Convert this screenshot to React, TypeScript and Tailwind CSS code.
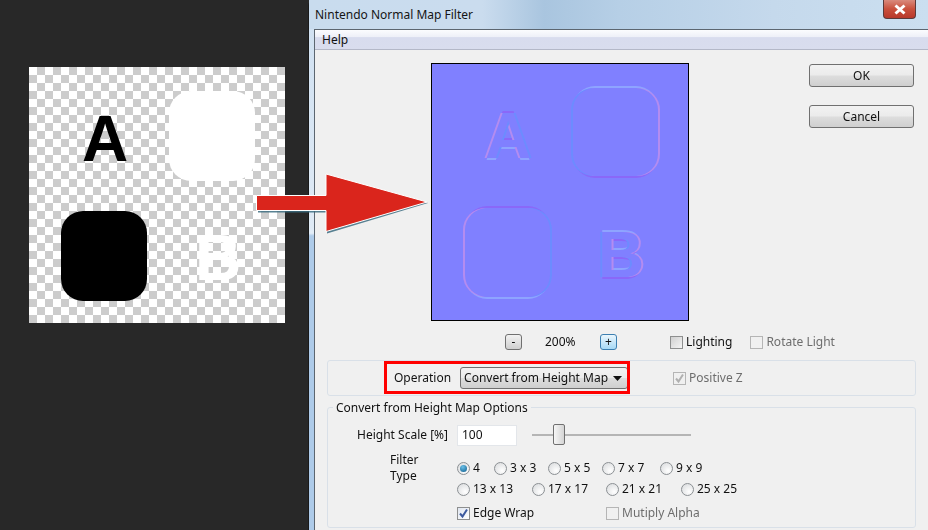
import React from "react";

const Emboss = ({ raised, children }: { raised: boolean; children: React.ReactNode }) => {
  const c = raised
    ? { l: "#6c8cff", r: "#b48cf0", t: "#8ea4ff", b: "#8a68f8" }
    : { l: "#b48cf0", r: "#6c8cff", t: "#8a68f8", b: "#8ea4ff" };
  return (
    <g>
      <g fill={c.t} transform="translate(0,-2)">{children}</g>
      <g fill={c.b} transform="translate(0,2)">{children}</g>
      <g fill={c.l} transform="translate(-2,0)">{children}</g>
      <g fill={c.r} transform="translate(2,0)">{children}</g>
      <g fill="#8080ff">{children}</g>
    </g>
  );
};

const NormalMap = () => (
  <svg width="256" height="256" viewBox="0 0 256 256" className="block">
    <defs>
      <filter id="soft"><feGaussianBlur stdDeviation="0.7" /></filter>
    </defs>
    <rect width="256" height="256" fill="#8080ff" />
    <g filter="url(#soft)" fontFamily="Liberation Sans, sans-serif" fontWeight="700">
      <Emboss raised><rect x="141" y="24" width="85" height="88" rx="22" /></Emboss>
      <Emboss raised={false}><rect x="33" y="144" width="85" height="89" rx="22" /></Emboss>
      <Emboss raised={false}><text x="53" y="94" fontSize="64">A</text></Emboss>
      <Emboss raised><text x="166" y="213" fontSize="64">B</text></Emboss>
    </g>
  </svg>
);

const HeightMap = () => (
  <svg width="256" height="256" viewBox="0 0 256 256" className="block">
    <defs>
      <pattern id="chk" width="16" height="16" patternUnits="userSpaceOnUse">
        <rect width="16" height="16" fill="#ffffff" />
        <rect x="8" width="8" height="8" fill="#cccccc" />
        <rect y="8" width="8" height="8" fill="#cccccc" />
      </pattern>
    </defs>
    <rect width="256" height="256" fill="url(#chk)" />
    <rect x="140" y="24" width="86" height="90" rx="22" fill="#ffffff" />
    <rect x="32" y="144" width="86" height="90" rx="22" fill="#000000" />
    <text x="53" y="94" fontSize="64" fontWeight="700" fontFamily="Liberation Sans, sans-serif" fill="#000">A</text>
    <text x="166" y="213" fontSize="64" fontWeight="700" fontFamily="Liberation Sans, sans-serif" fill="#fff">B</text>
  </svg>
);

const Check = ({ checked, disabled, dull }: { checked?: boolean; disabled?: boolean; dull?: boolean }) => (
  <span
    className={`flex h-[13px] w-[13px] shrink-0 items-center justify-center border ${
      disabled ? "border-[#b5b5b5] bg-[#f0f0f0]" : dull ? "border-[#8e8f8f] bg-[linear-gradient(135deg,#d0d0d0,#f4f4f4)]" : "border-[#8e8f8f] bg-[linear-gradient(135deg,#e0e6f0,#ffffff)]"
    }`}
  >
    {checked && (
      <svg width="11" height="11" viewBox="0 0 11 11">
        <path d="M2 5.5 L4.5 8.5 L9 1.5" fill="none" stroke={disabled ? "#b0b0b0" : "#3d5a9e"} strokeWidth="2" />
      </svg>
    )}
  </span>
);

const Radio = ({ on, label, w }: { on?: boolean; label: string; w: string }) => (
  <span className={`flex items-center ${w}`}>
    <span className="flex h-[13px] w-[13px] shrink-0 items-center justify-center rounded-full border border-[#8b8f93] bg-[radial-gradient(circle_at_65%_70%,#ffffff,#d6d8da)]">
      {on && <span className="h-[7px] w-[7px] rounded-full bg-[radial-gradient(circle_at_40%_30%,#6cc0e8,#0c5c8c)]" />}
    </span>
    <span className="ml-[3px] text-[#111]">{label}</span>
  </span>
);

const Btn = ({ children }: { children: React.ReactNode }) => (
  <div className="flex h-[23px] w-[105px] items-center justify-center rounded-[3px] border border-[#707070] bg-[linear-gradient(#f2f2f2_0%,#ebebeb_48%,#dddddd_52%,#cfcfcf_100%)] text-[#111]">
    {children}
  </div>
);

const Small = ({ children, hot }: { children: React.ReactNode; hot?: boolean }) => (
  <span
    className={`flex h-[16px] w-[17px] items-center justify-center rounded-[3px] border text-[12px] leading-none text-[#111] ${
      hot ? "border-[#3c7fb1] bg-[linear-gradient(#eaf6fd,#a7d9f5)]" : "border-[#707070] bg-[linear-gradient(#f2f2f2,#cfcfcf)]"
    }`}
  >
    {children}
  </span>
);

export default function App() {
  return (
    <div className="relative flex h-[530px] w-[928px] overflow-hidden bg-[#282828] font-['Noto_Sans',sans-serif] text-[12px] leading-[16px]">
      <div className="w-[308px] shrink-0 pl-[29px] pt-[67px]">
        <HeightMap />
      </div>

      <div className="flex min-w-0 flex-1 flex-col rounded-tl-[6px] border-l border-[#1a1a1a] bg-[linear-gradient(#cfe0f1_0%,#dfeaf5_43%,#e4eef8_44%,#aecbe9_44.5%,#aecbe9_100%)] pl-[5px]">
        <div className="-ml-[5px] flex h-[29px] shrink-0 items-start justify-between bg-[linear-gradient(90deg,#c9dcee_0%,#cadcee_28%,#a9c5df_38%,#b6cfe6_50%,#c5d9ec_75%,#cbdff0_100%)] pl-[6px] pr-[12px]">
          <span className="pt-[7px] text-[#151515]">Nintendo Normal Map Filter</span>
          <div className="flex h-[19px] w-[33px] items-center justify-center rounded-b-[4px] border border-t-0 border-[#5a3a3a] bg-[linear-gradient(#d98a7c_0%,#c9503c_50%,#b8382a_100%)] text-[14px] font-bold leading-none text-white">
            <svg width="14" height="11" viewBox="0 0 14 11">
              <path d="M2.5 1.5 L11.5 9.5 M11.5 1.5 L2.5 9.5" stroke="#ffffff" strokeWidth="3" />
            </svg>
          </div>
        </div>

        <div className="flex min-h-0 flex-1 flex-col border-l border-t border-[#5c6670] bg-[#f0f0f0]">
          <div className="flex h-[20px] shrink-0 items-center border-b border-[#b4b8c8] bg-[linear-gradient(#fbfcfe_0%,#eef0f8_35%,#d8dcee_40%,#d9ddee_100%)] pl-[7px] text-[#111]">
            Help
          </div>

          <div className="flex pt-[13px]">
            <div className="ml-[116px] border border-black">
              <NormalMap />
            </div>
            <div className="ml-[120px] flex flex-col gap-[18px] pt-[1px]">
              <Btn>OK</Btn>
              <Btn>Cancel</Btn>
            </div>
          </div>

          <div className="flex h-[16px] items-center pt-[0px] mt-[13px]">
            <span className="ml-[190px]"><Small>-</Small></span>
            <span className="ml-[23px] w-[55px] text-[#111]">200%</span>
            <Small hot>+</Small>
            <span className="ml-[53px] flex items-center">
              <Check dull />
              <span className="ml-[3px] text-[#111]">Lighting</span>
            </span>
            <span className="ml-[18px] flex items-center">
              <Check disabled />
              <span className="ml-[3px] text-[#6d6d6d]">Rotate Light</span>
            </span>
          </div>

          <div className="relative ml-[12px] mt-[10px] flex h-[36px] w-[589px] shrink-0 items-center rounded-[3px] border border-[#d9e0e8]">
            <span className="ml-[66px] text-[#111]">Operation</span>
            <div className="ml-[9px] flex h-[22px] w-[168px] items-center justify-between rounded-[3px] border border-[#707070] bg-[linear-gradient(#f2f2f2_0%,#ebebeb_48%,#dddddd_52%,#cfcfcf_100%)] pl-[3px] pr-[5px] text-[#111]">
              <span>Convert from Height Map</span>
              <svg width="9" height="5" viewBox="0 0 9 5"><path d="M0 0 H9 L4.5 5 Z" fill="#111" /></svg>
            </div>
            <span className="ml-[45px] flex items-center">
              <Check checked disabled />
              <span className="ml-[3px] text-[#6d6d6d]">Positive Z</span>
            </span>
            <div className="absolute left-[56px] top-0 h-[33px] w-[246px] border-[3px] border-[#ff0000]" />
          </div>

          <div className="relative ml-[12px] mt-[11px] h-[121px] w-[589px] shrink-0 rounded-[3px] border border-[#d9e0e8] pt-[16px]">
            <span className="absolute -top-[8px] left-[5px] bg-[#f0f0f0] px-[3px] text-[#111]">Convert from Height Map Options</span>
            <div className="flex h-[22px] items-center">
              <span className="w-[120px] pr-[0px] text-right text-[#111]">Height Scale [%]</span>
              <div className="ml-[9px] flex h-[21px] w-[60px] items-center border border-[#e3e6ea] bg-white pl-[4px] text-[#111]">100</div>
              <div className="relative ml-[15px] h-[2px] w-[159px] bg-[#b5b5b5]">
                <div className="absolute -top-[10px] left-[21px] h-[21px] w-[12px] rounded-[2px] border border-[#707070] bg-[linear-gradient(90deg,#f6f6f6,#d4d4d4)]" />
              </div>
            </div>
            <div className="ml-[62px] mt-[14px] flex h-[16px] items-center">
              <span className="w-[58px] text-[#111]">Filter Type</span>
              <span className="ml-[9px] flex items-center">
                <Radio on label="4" w="w-[37px]" />
                <Radio label="3 x 3" w="w-[54px]" />
                <Radio label="5 x 5" w="w-[54px]" />
                <Radio label="7 x 7" w="w-[58px]" />
                <Radio label="9 x 9" w="w-[58px]" />
              </span>
            </div>
            <div className="ml-[129px] mt-[5px] flex h-[16px] items-center">
              <Radio label="13 x 13" w="w-[75px]" />
              <Radio label="17 x 17" w="w-[74px]" />
              <Radio label="21 x 21" w="w-[75px]" />
              <Radio label="25 x 25" w="w-[75px]" />
            </div>
            <div className="ml-[129px] mt-[8px] flex h-[16px] items-center">
              <span className="flex w-[149px] items-center">
                <Check checked />
                <span className="ml-[3px] text-[#111]">Edge Wrap</span>
              </span>
              <span className="flex items-center">
                <Check disabled />
                <span className="ml-[3px] text-[#6d6d6d]">Mutiply Alpha</span>
              </span>
            </div>
          </div>
        </div>
      </div>

      <svg className="absolute left-[250px] top-[168px]" width="184" height="70" viewBox="250 168 184 70">
        <path d="M257 196.5 H326 V175 L427 202 L326 232.5 V211.5 H257 Z" fill="#3c6c80" opacity="0.85" transform="translate(1,1)" />
        <path d="M256.5 195.5 H326 V174 L427 202 L326 231.5 V210.5 H256.5 Z" fill="#da251c" stroke="#ffffff" strokeWidth="1" />
      </svg>
    </div>
  );
}
